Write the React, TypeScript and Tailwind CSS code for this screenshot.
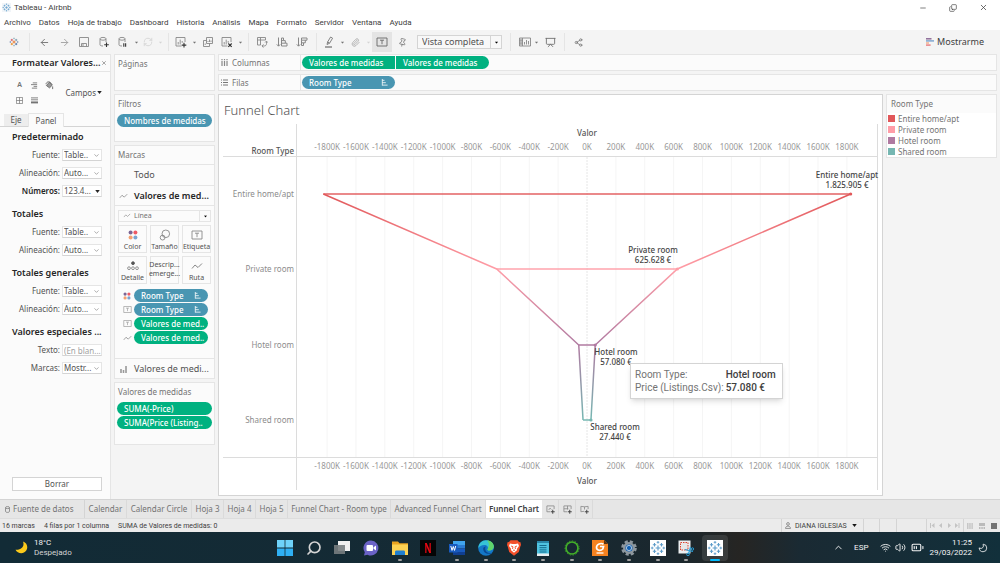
import React from 'react';
import {
  ArrowLeft,
  ArrowRight,
  BatteryMedium,
  ChevronDown,
  ChevronUp,
  Copy,
  Minus,
  Moon,
  Paperclip,
  Pin,
  Presentation,
  RefreshCw,
  Search,
  Share2,
  Volume2,
  Wifi,
  X,
} from 'lucide-react';
import clsx from 'clsx';

type IconProps = { className?: string };

/* ---------- small drawings ---------- */

const TableauMark = ({ className, mono }: IconProps & { mono?: boolean }) => {
  const c = mono
    ? ['#5b9bc9', '#5b9bc9', '#5b9bc9', '#5b9bc9', '#5b9bc9']
    : ['#e8762c', '#d8606c', '#7ba0b0', '#5a78a5', '#eb912c'];
  return (
    <svg viewBox="0 0 16 16" className={className} fill="none" strokeWidth={mono ? 1.1 : 1.6}>
      <path d="M8 5.6v4.8M5.6 8h4.8" stroke={c[0]} />
      <path d="M4.5 3v3.4M2.8 4.7h3.4" stroke={c[1]} />
      <path d="M11.5 3v3.4M9.8 4.7h3.4" stroke={c[2]} />
      <path d="M4.5 9.6V13M2.8 11.3h3.4" stroke={c[4]} />
      <path d="M11.5 9.6V13M9.8 11.3h3.4" stroke={c[3]} />
      <path d="M8 1v2.6M6.7 2.3h2.6M8 12.4v2.6M6.7 13.7h2.6" stroke={c[2]} strokeWidth="0.9" />
      <path d="M2.2 6.7v2.6M.9 8h2.6M13.8 6.7v2.6M12.5 8h2.6" stroke={c[3]} strokeWidth="0.9" />
    </svg>
  );
};

const SaveIcon = () => (
  <svg viewBox="0 0 12 12" className="size-3" fill="none" stroke="#888" strokeWidth="0.9">
    <path d="M1.5 1.5h9v9h-9zM3.5 10.5v-3h5v3M5 8v2" />
  </svg>
);

const DataIcon = ({ pause }: { pause?: boolean }) => (
  <svg viewBox="0 0 12 12" className="size-3" fill="none" stroke="#888" strokeWidth="0.9">
    <ellipse cx="5" cy="2.8" rx="3" ry="1.4" />
    <path d="M2 2.8v6c0 .8 1.3 1.2 3 1.2M8 2.8V6" />
    {pause ? (
      <path d="M6.8 7.2v3.6M8.6 7.2v3.6" stroke="#444" strokeWidth="1.2" />
    ) : (
      <path d="M8.5 6.5v4.6M6.2 8.8h4.6" stroke="#333" strokeWidth="1.1" />
    )}
  </svg>
);

const SheetIcon = ({ clear }: { clear?: boolean }) => (
  <svg viewBox="0 0 12 12" className="size-3" fill="none" stroke="#888" strokeWidth="0.9">
    <path d="M10 6V1.5H1v8.5h5.5M3.2 8.5V6M5.2 8.5V3.6M7.2 6.8V5" />
    {clear ? (
      <path d="M7.3 7.5l3.4 3.4M10.7 7.5l-3.4 3.4" stroke="#333" strokeWidth="1.1" />
    ) : (
      <path d="M9 6.8v4.6M6.7 9.1h4.6" stroke="#333" strokeWidth="1.1" />
    )}
  </svg>
);

const DuplicateIcon = () => (
  <svg viewBox="0 0 12 12" className="size-3" fill="none" stroke="#888" strokeWidth="0.9">
    <path d="M4.5 1.5h6v6h-6zM4.5 4.5h-3v6h6v-3M7.5 6V3.5M6 6V5M9 6V4.5M3.2 9V7.5" />
  </svg>
);

const SwapIcon = () => (
  <svg viewBox="0 0 12 12" className="size-3" fill="none" stroke="#888" strokeWidth="0.9">
    <path d="M1.5 1.5h8v2.5h-5v5h-3zM4.5 1.5V4M1.5 4h3M10.500 5.5v2.200c0 1.400-1 2.300-2.300 2.300H6M7.500 8.400L5.900 10l1.600 1.600M9.100 6.500L10.500 5l1 1.500" />
  </svg>
);

const SortIcon = ({ desc }: { desc?: boolean }) => (
  <svg viewBox="0 0 12 12" className="size-3" fill="none" stroke="#888" strokeWidth="1">
    <path d="M2.5 1.5v8.5M.8 8.4L2.5 10.2 4.2 8.4" />
    {desc ? (
      <path d="M5.5 2h5.500v2.200H5.500zM5.500 4.200V9.500h2V6.800h1.800V4.200M5.500 6.800h2" />
    ) : (
      <path d="M5.500 10V2h2v2.600h-2M7.500 4.600h1.800v2.600H5.500M9.300 7.200H11V10H5.500" />
    )}
  </svg>
);

const HighlightIcon = () => (
  <svg viewBox="0 0 12 12" className="size-3" fill="none" stroke="#777" strokeWidth="0.9">
    <path d="M4 8.5l.6-2.5L7.6 1l2 1.2-3 5zM4.6 6l2 1.2" />
    <path d="M2 11h7" strokeWidth="1.3" />
  </svg>
);

const TextBoxIcon = ({ className = 'size-3', color = '#666' }: IconProps & { color?: string }) => (
  <svg viewBox="0 0 12 12" className={className} fill="none" stroke={color} strokeWidth="0.9">
    <path d="M1 2h10v8H1zM4 4.2h4M6 4.2v4" />
  </svg>
);

const CardsIcon = () => (
  <svg viewBox="0 0 14 12" className="h-3 w-[14px]" fill="none" stroke="#888" strokeWidth="0.9">
    <path d="M1.500 2h11v8h-11zM4.500 2v8M1.500 4.500h3M1.500 7.200h3M6.500 8.500V6M8.500 8.500V4M10.500 8.500V5" />
    <path d="M3 2.500v7" strokeWidth="1.600" stroke="#aaa" />
  </svg>
);

const ShowMeIcon = () => (
  <svg viewBox="0 0 8 8" className="size-2" strokeWidth="1.5">
    <path d="M0 .8h5.5" stroke="#8d6b97" />
    <path d="M0 2.9h8" stroke="#7fa6d0" />
    <path d="M0 5h3" stroke="#f5b08f" />
    <path d="M0 7.1h4.6" stroke="#e98084" />
  </svg>
);

const Caret = ({ className = 'text-neutral-500' }: IconProps) => (
  <svg viewBox="0 0 6 4" className={clsx('h-[3px] w-[5px] shrink-0', className)}>
    <path d="M0 0h6L3 4z" fill="currentColor" />
  </svg>
);

const LineMark = ({ className }: IconProps) => (
  <svg viewBox="0 0 12 8" className={className} fill="none" stroke="#888" strokeWidth="1">
    <path d="M1 6.5L4 3l3 2.5L11 1.5" />
  </svg>
);

const ColorDots = ({ className }: IconProps) => (
  <svg viewBox="0 0 10 10" className={className}>
    <circle cx="2.6" cy="2.6" r="2" fill="#7c6594" />
    <circle cx="7.4" cy="2.6" r="2" fill="#ef5a65" />
    <circle cx="2.6" cy="7.4" r="2" fill="#f4a070" />
    <circle cx="7.4" cy="7.4" r="2" fill="#7ba3d0" />
  </svg>
);

const SizeIcon = () => (
  <svg viewBox="0 0 12 12" className="size-3" fill="none" stroke="#888" strokeWidth="0.9">
    <circle cx="6.8" cy="4.8" r="3.8" />
    <circle cx="3.6" cy="8.6" r="2.4" />
  </svg>
);

const DetailIcon = () => (
  <svg viewBox="0 0 12 10" className="h-[10px] w-3" fill="none" stroke="#888" strokeWidth="0.9">
    <circle cx="6" cy="2.2" r="1.4" fill="#555" stroke="#555" />
    <circle cx="2" cy="7.2" r="1.4" />
    <circle cx="6" cy="7.2" r="1.4" />
    <circle cx="10" cy="7.2" r="1.4" />
  </svg>
);

const PillSort = () => (
  <svg viewBox="0 0 8 8" className="size-[7px] shrink-0" stroke="#fff" strokeWidth="0.9">
    <path d="M1.5 0v7.5M1.5 1.5H4M1.5 4.2h4M1.5 7h6" fill="none" />
  </svg>
);

/* ---------- top of the window ---------- */

const menus = [
  'Archivo', 'Datos', 'Hoja de trabajo', 'Dashboard', 'Historia', 'Análisis',
  'Mapa', 'Formato', 'Servidor', 'Ventana', 'Ayuda',
];

const TitleBar = () => (
  <header className="bg-white font-['Roboto',sans-serif] text-[8px] leading-[14px] text-neutral-700">
    <div className="flex h-[15px] items-center pl-[2px] pr-3">
      <TableauMark mono className="mr-[3px] size-[9px] bg-slate-100" />
      <h1>Tableau - Airbnb</h1>
      <div className="ml-auto flex items-center gap-[22px] text-neutral-700">
        <button aria-label="Minimizar"><Minus size={8} /></button>
        <button aria-label="Restaurar"><Copy size={8} className="-scale-x-100 rotate-180" /></button>
        <button aria-label="Cerrar"><X size={9} /></button>
      </div>
    </div>
    <nav className="flex h-[15px] items-center gap-2 pl-1">
      {menus.map((m) => (
        <button key={m} className="whitespace-nowrap">{m}</button>
      ))}
    </nav>
  </header>
);

const Tool = ({ label, className = 'w-5', children }: { label: string; className?: string; children: React.ReactNode }) => (
  <button aria-label={label} className={clsx('flex h-5 shrink-0 items-center justify-center text-neutral-500', className)}>
    {children}
  </button>
);

const Sep = ({ className = 'w-2' }: IconProps) => (
  <div className={clsx('flex h-[18px] shrink-0 justify-center', className)}>
    <div className="w-px bg-neutral-200" />
  </div>
);

const Toolbar = () => (
  <div className="flex h-6 items-center bg-[#f4f4f4] pl-1 pr-4">
    <Tool label="Inicio"><TableauMark className="size-[10px]" /></Tool>
    <Sep className="w-[10px]" />
    <Tool label="Deshacer"><ArrowLeft size={11} /></Tool>
    <Tool label="Rehacer"><ArrowRight size={11} className="text-neutral-400" /></Tool>
    <Tool label="Guardar"><SaveIcon /></Tool>
    <Tool label="Nueva fuente de datos"><DataIcon /></Tool>
    <Tool label="Pausar actualizaciones" className="w-[18px]"><DataIcon pause /></Tool>
    <Tool label="Opciones de actualización" className="w-2"><Caret className="scale-75" /></Tool>
    <Tool label="Actualizar" className="w-4"><RefreshCw size={10} className="text-neutral-300" /></Tool>
    <Tool label="Más opciones" className="w-2"><Caret className="scale-75 text-neutral-300" /></Tool>
    <Sep />
    <Tool label="Nueva hoja" className="w-[18px]"><SheetIcon /></Tool>
    <Tool label="Opciones de hoja" className="w-2"><Caret className="scale-75" /></Tool>
    <Tool label="Duplicar"><DuplicateIcon /></Tool>
    <Tool label="Borrar hoja" className="w-[18px]"><SheetIcon clear /></Tool>
    <Tool label="Opciones de borrado" className="w-2"><Caret className="scale-75" /></Tool>
    <Sep />
    <Tool label="Intercambiar filas y columnas"><SwapIcon /></Tool>
    <Tool label="Orden ascendente"><SortIcon /></Tool>
    <Tool label="Orden descendente"><SortIcon desc /></Tool>
    <Sep />
    <Tool label="Resaltar" className="w-[18px]"><HighlightIcon /></Tool>
    <Tool label="Opciones de resaltado" className="w-2"><Caret className="scale-75" /></Tool>
    <Tool label="Agrupar" className="w-[18px]"><Paperclip size={9} className="text-neutral-400" /></Tool>
    <Tool label="Opciones de grupo" className="w-2"><Caret className="scale-75 text-neutral-300" /></Tool>
    <Tool label="Mostrar etiquetas" className="w-5 bg-[#e4e4e4]"><TextBoxIcon /></Tool>
    <Tool label="Fijar ejes"><Pin size={9} className="rotate-12" /></Tool>
    <div className="relative ml-[5px] w-[85px] shrink-0">
      <select
        aria-label="Ajuste de la vista"
        className="block h-[14px] w-full appearance-none rounded-none border border-neutral-300 bg-[#f8f8f8] pl-1 text-[9px] leading-3 text-neutral-600"
      >
        <option>Vista completa</option>
      </select>
      <div className="pointer-events-none absolute inset-y-0 right-0 flex w-3 items-center justify-center border-l border-neutral-300">
        <Caret className="scale-75" />
      </div>
    </div>
    <Sep className="w-4" />
    <Tool label="Mostrar tarjetas" className="w-[14px]"><CardsIcon /></Tool>
    <Tool label="Opciones de tarjetas" className="w-2"><Caret className="scale-75" /></Tool>
    <Tool label="Modo presentación"><Presentation size={11} /></Tool>
    <Sep />
    <Tool label="Compartir"><Share2 size={9} /></Tool>
    <button className="ml-auto flex items-center gap-[3px] text-[9px] text-neutral-700">
      <ShowMeIcon />
      Mostrarme
    </button>
  </div>
);

/* ---------- format panel ---------- */

type Field = { label: string; value: string; kind?: 'input' | 'strong' };

const groups: { title: string; fields: Field[] }[] = [
  {
    title: 'Predeterminado',
    fields: [
      { label: 'Fuente:', value: 'Table..' },
      { label: 'Alineación:', value: 'Auto...' },
      { label: 'Números:', value: '123.4...', kind: 'strong' },
    ],
  },
  {
    title: 'Totales',
    fields: [
      { label: 'Fuente:', value: 'Table..' },
      { label: 'Alineación:', value: 'Auto...' },
    ],
  },
  {
    title: 'Totales generales',
    fields: [
      { label: 'Fuente:', value: 'Table..' },
      { label: 'Alineación:', value: 'Auto...' },
    ],
  },
  {
    title: 'Valores especiales ...',
    fields: [
      { label: 'Texto:', value: '(En blan...', kind: 'input' },
      { label: 'Marcas:', value: 'Mostr...' },
    ],
  },
];

const FieldRow = ({ id, field }: { id: string; field: Field }) => {
  const box = 'block h-3 w-full appearance-none rounded-none border border-neutral-200 border-b-neutral-300 bg-white pl-px text-[8px] leading-[10px]';
  return (
    <div className="flex h-[18px] items-center gap-[2px]">
      <label
        htmlFor={id}
        className={clsx('w-[60px] text-right', field.kind === 'strong' ? 'font-semibold text-neutral-800' : 'text-neutral-600')}
      >
        {field.label}
      </label>
      <div className="relative w-10">
        {field.kind === 'input' ? (
          <input id={id} defaultValue={field.value} className={clsx(box, 'text-neutral-400')} />
        ) : (
          <>
            <select id={id} className={clsx(box, 'text-neutral-600')}>
              <option>{field.value}</option>
            </select>
            <span className="pointer-events-none absolute inset-y-0 right-[2px] flex items-center text-neutral-500">
              {field.kind === 'strong' ? <Caret className="text-neutral-800" /> : <ChevronDown size={7} />}
            </span>
          </>
        )}
      </div>
    </div>
  );
};

const FormatPanel = () => (
  <aside className="flex w-[111px] shrink-0 flex-col border-r border-neutral-200 bg-[#fbfbfb] text-[8px] leading-3 text-neutral-600">
    <div className="flex h-[18px] items-center justify-between border-b border-t border-neutral-200 pl-3 pr-[3px]">
      <h2 className="whitespace-nowrap text-[9px] font-semibold text-neutral-800">Formatear Valores...</h2>
      <button aria-label="Cerrar panel"><X size={6} /></button>
    </div>
    <div className="flex h-[41px] items-center justify-between pl-[14px] pr-2">
      <div className="grid grid-cols-3 gap-x-1 text-neutral-500">
        <button aria-label="Fuente" className="flex size-[11px] items-center justify-center text-[7px] font-semibold">A</button>
        <button aria-label="Alineación" className="flex size-[11px] items-center justify-center">
          <svg viewBox="0 0 8 8" className="size-[7px]" stroke="currentColor" fill="none"><path d="M2 1h5M0 3h7M3 5h4M1 7h6" /></svg>
        </button>
        <button aria-label="Sombreado" className="flex size-[11px] items-center justify-center">
          <svg viewBox="0 0 10 10" className="size-[9px]" stroke="#666" fill="#999"><path d="M1.5 5L5 1.2 8.2 4.5 5 7.6zM8.5 6v3" /><path d="M1 3.5C2 0 6 0 7 3.5" fill="none" /></svg>
        </button>
        <button aria-label="Bordes" className="mt-1 flex size-[11px] items-center justify-center">
          <svg viewBox="0 0 8 8" className="size-[7px]" stroke="currentColor" strokeWidth="0.8" fill="none"><path d="M.5.5h7v7h-7zM4 .5v7M.5 4h7" /></svg>
        </button>
        <button aria-label="Líneas" className="mt-1 flex size-[11px] items-center justify-center">
          <svg viewBox="0 0 8 8" className="size-[7px]" stroke="currentColor" fill="none"><path d="M0 1h8" /><path d="M0 3.2h8" /><path d="M0 6.2h8" strokeWidth="2.2" /></svg>
        </button>
      </div>
      <button className="flex items-center gap-px">
        Campos <Caret className="text-neutral-800" />
      </button>
    </div>
    <div className="flex h-[14px] items-end border-b border-neutral-300 pl-1">
      <button className="h-3 w-6 bg-neutral-200/60">Eje</button>
      <button className="-mb-px h-[14px] w-9 border-x border-t border-neutral-200 bg-[#fbfbfb]">Panel</button>
    </div>
    <div className="flex flex-col gap-[5px] pt-px">
      {groups.map((g) => (
        <section key={g.title}>
          <h3 className="pl-3 text-[9px] font-semibold leading-[18px] text-neutral-800">{g.title}</h3>
          {g.fields.map((f) => (
            <FieldRow key={f.label} id={`${g.title}-${f.label}`.replace(/\W/g, '')} field={f} />
          ))}
        </section>
      ))}
    </div>
    <button className="mx-2 mb-2 ml-3 mt-auto h-[14px] border border-neutral-300 bg-white">Borrar</button>
  </aside>
);

/* ---------- cards ---------- */

const Pill = ({ color, sort, className, children }: { color: 'blue' | 'green'; sort?: boolean; className?: string; children: React.ReactNode }) => (
  <button
    className={clsx(
      'flex h-[13px] items-center justify-between whitespace-nowrap pl-[7px] pr-[7px] text-left text-[8px] font-medium leading-3 text-white',
      color === 'blue' ? 'bg-[#4996b2]' : 'bg-[#00b180]',
      className,
    )}
  >
    {children}
    {sort && <PillSort />}
  </button>
);

const Card = ({ title, className, children }: { title: string; className?: string; children?: React.ReactNode }) => (
  <section className={clsx('border border-neutral-200 bg-[#fbfbfb]', className)}>
    <h2 className="pl-[3px] text-[8px] leading-[18px] text-neutral-500">{title}</h2>
    {children}
  </section>
);

const MarkButton = ({ icon, children }: { icon?: React.ReactNode; children: React.ReactNode }) => (
  <button className="flex h-7 flex-col items-center justify-end border border-neutral-200 bg-[#fbfbfb] pb-px text-[7px] leading-[9px] text-neutral-600">
    {icon && <span className="flex grow items-center pt-px">{icon}</span>}
    {children}
  </button>
);

const markPills = [
  { icon: <ColorDots className="size-2" />, text: 'Room Type', color: 'blue' as const },
  { icon: <TextBoxIcon className="size-[9px]" color="#999" />, text: 'Room Type', color: 'blue' as const },
  { icon: <TextBoxIcon className="size-[9px]" color="#999" />, text: 'Valores de med..', color: 'green' as const },
  { icon: <LineMark className="h-[6px] w-[9px]" />, text: 'Valores de med..', color: 'green' as const },
];

const Cards = () => (
  <div className="flex w-[101px] shrink-0 flex-col gap-[3px]">
    <Card title="Páginas" className="h-[37px]" />
    <Card title="Filtros" className="h-12">
      <Pill color="blue" className="mx-[2px] mt-px w-[95px] rounded-full">Nombres de medidas</Pill>
    </Card>
    <Card title="Marcas" className="h-[234px]">
      <button className="block h-[21px] w-full border-t border-neutral-200 pl-[19px] text-left text-[9px] text-neutral-600">Todo</button>
      <button className="flex h-[21px] w-full items-center gap-[6px] border-y border-neutral-200 pl-1 text-[9px] font-semibold text-neutral-800">
        <LineMark className="h-[6px] w-[9px] shrink-0" />
        <span className="whitespace-nowrap">Valores de med...</span>
      </button>
      <div className="mx-[3px] mt-1">
        <div className="relative">
          <select aria-label="Tipo de marca" className="block h-3 w-full appearance-none rounded-none border border-neutral-200 bg-[#fbfbfb] pl-[15px] text-[7px] leading-[10px] text-neutral-500">
            <option>Línea</option>
          </select>
          <LineMark className="pointer-events-none absolute left-[5px] top-[3px] h-[5px] w-2" />
          <div className="pointer-events-none absolute inset-y-0 right-0 flex w-3 items-center justify-center border-l border-neutral-200">
            <Caret className="scale-75" />
          </div>
        </div>
        <div className="mt-[3px] grid grid-cols-3 gap-[3px]">
          <MarkButton icon={<ColorDots className="size-[10px]" />}>Color</MarkButton>
          <MarkButton icon={<SizeIcon />}>Tamaño</MarkButton>
          <MarkButton icon={<TextBoxIcon color="#888" />}>Etiqueta</MarkButton>
          <MarkButton icon={<DetailIcon />}>Detalle</MarkButton>
          <MarkButton><span className="pb-1">Descrip...<br />emerge...</span></MarkButton>
          <MarkButton icon={<LineMark className="h-2 w-3" />}>Ruta</MarkButton>
        </div>
      </div>
      <ul className="mt-[5px] flex flex-col gap-px">
        {markPills.map((p, i) => (
          <li key={i} className="flex items-center">
            <span className="flex w-[19px] justify-center pl-[5px]">{p.icon}</span>
            <Pill color={p.color} sort={p.color === 'blue'} className="w-[74px] rounded-full">{p.text}</Pill>
          </li>
        ))}
      </ul>
      <button className="mt-[14px] flex h-5 w-full items-center gap-[6px] border-t border-neutral-200 pl-1 text-[9px] text-neutral-600">
        <svg viewBox="0 0 9 8" className="h-2 w-[9px] shrink-0" stroke="#999" strokeWidth="1.6"><path d="M2 8V4M4.5 8V5M7 8V1" /></svg>
        <span className="whitespace-nowrap">Valores de medi...</span>
      </button>
    </Card>
    <Card title="Valores de medidas" className="h-[63px]">
      <div className="mx-[2px] mt-px flex flex-col gap-px">
        <Pill color="green" className="w-[95px] rounded-full">SUMA(-Price)</Pill>
        <Pill color="green" className="w-[95px] rounded-full">SUMA(Price (Listing..</Pill>
      </div>
    </Card>
  </div>
);

/* ---------- shelves, chart, legend ---------- */

const Shelf = ({ name, icon, children }: { name: string; icon: React.ReactNode; children: React.ReactNode }) => (
  <div className="flex h-[17px] items-center border border-neutral-200 bg-[#fbfbfb] text-[8px] text-neutral-500">
    <div className="flex h-full w-[82px] shrink-0 items-center gap-1 border-r border-neutral-200 pl-[2px]">
      {icon}
      {name}
    </div>
    <div className="flex gap-px pl-px">{children}</div>
  </div>
);

const RED = '#e15759';
const PINK = '#ff9da7';
const PURPLE = '#b07aa1';
const TEAL = '#76b7b2';

const rooms = [
  { name: 'Entire home/apt', price: 1825905, label: '1.825.905 €', color: RED, y: 72 },
  { name: 'Private room', price: 625628, label: '625.628 €', color: PINK, y: 147 },
  { name: 'Hotel room', price: 57080, label: '57.080 €', color: PURPLE, y: 223 },
  { name: 'Shared room', price: 27440, label: '27.440 €', color: TEAL, y: 298 },
];

const ticks = Array.from({ length: 19 }, (_, i) => (i - 9) * 200);

// value in thousands -> horizontal position
const xScale = (k: number) => 368 + k * 0.1444;

const side = (sign: number) => rooms.map((r) => `${xScale((sign * r.price) / 1000)},${r.y}`).join(' ');

const labelPos = [
  [628, 56],
  [434, 131],
  [397, 233],
  [396, 308],
];

const FunnelChart = () => (
  <svg viewBox="0 0 663 370" className="block w-full" role="img" aria-label="Funnel Chart" fontSize="8">
    <defs>
      <linearGradient id="funnel" gradientUnits="userSpaceOnUse" x1="0" y1="72" x2="0" y2="298">
        <stop offset="0" stopColor={RED} />
        <stop offset="0.333" stopColor={PINK} />
        <stop offset="0.667" stopColor={PURPLE} />
        <stop offset="1" stopColor={TEAL} />
      </linearGradient>
    </defs>
    <g stroke="#f5f5f5">
      {ticks.map((t) => (
        <line key={t} x1={xScale(t)} x2={xScale(t)} y1="35" y2="335" stroke={t === 0 ? '#e6e6e6' : undefined} strokeDasharray={t === 0 ? '2 1' : undefined} />
      ))}
    </g>
    <path d="M4 34.5h655M4 335.5h655M77.5 2v366M658.5 2v366" stroke="#dcdcdc" fill="none" />
    <g fill="#999" textAnchor="middle">
      {ticks.map((t) => (
        <React.Fragment key={t}>
          <text x={xScale(t)} y="28">{t}K</text>
          <text x={xScale(t)} y="347">{t}K</text>
        </React.Fragment>
      ))}
    </g>
    <g fill="#555" textAnchor="middle" fontWeight="500">
      <text x="368" y="14">Valor</text>
      <text x="368" y="362">Valor</text>
      <text x="75" y="32" textAnchor="end">Room Type</text>
    </g>
    <g fill="#8c8c8c" textAnchor="end">
      {rooms.map((r) => (
        <text key={r.name} x="75" y={r.y + 3}>{r.name}</text>
      ))}
    </g>
    {rooms.map((r, i) => (
      <line
        key={r.name}
        x1={xScale(-r.price / 1000)}
        x2={xScale(r.price / 1000)}
        y1={r.y}
        y2={r.y}
        stroke={r.color}
        strokeWidth={i < 2 ? 2 : 1.5}
        strokeOpacity={i < 2 ? 0.7 : 1}
      />
    ))}
    <polyline points={side(-1)} fill="none" stroke="url(#funnel)" strokeWidth="1.5" />
    <polyline points={side(1)} fill="none" stroke="url(#funnel)" strokeWidth="1.5" />
    {rooms.map((r) => (
      <circle key={r.name} cx={xScale(r.price / 1000)} cy={r.y} r="1.6" fill={r.color} />
    ))}
    <g fill="#444" textAnchor="middle" fontWeight="500">
      {rooms.map((r, i) => (
        <text key={r.name} x={labelPos[i][0]} y={labelPos[i][1]}>
          {r.name}
          <tspan x={labelPos[i][0]} dy="10">{r.label}</tspan>
        </text>
      ))}
    </g>
  </svg>
);

const Sheet = () => (
  <section className="relative mb-[3px] grow border border-neutral-300 bg-white">
    <h2 className="h-[27px] pl-[5px] pt-1 text-[13px] font-light leading-[22px] text-neutral-600">Funnel Chart</h2>
    <FunnelChart />
    <div role="tooltip" className="absolute left-[62%] top-[67%] border border-neutral-300 bg-white py-1 pl-1 pr-[6px] font-['Roboto',sans-serif] shadow-md">
      <dl className="grid grid-cols-[auto_auto] gap-x-[2px] whitespace-nowrap text-[10px] leading-[13px]">
        <dt className="text-neutral-500">Room Type:</dt>
        <dd className="font-medium text-neutral-700">Hotel room</dd>
        <dt className="text-neutral-500">Price (Listings.Csv):</dt>
        <dd className="font-medium text-neutral-700">57.080 €</dd>
      </dl>
    </div>
  </section>
);

const legend = [
  { name: 'Entire home/apt', swatch: 'bg-[#e15759]' },
  { name: 'Private room', swatch: 'bg-[#ff9da7]' },
  { name: 'Hotel room', swatch: 'bg-[#b07aa1]' },
  { name: 'Shared room', swatch: 'bg-[#76b7b2]' },
];

const Legend = () => (
  <aside className="w-[111px] shrink-0 self-start border border-neutral-200 bg-white text-[8px] text-neutral-500">
    <h2 className="bg-[#fbfbfb] pl-1 leading-[18px]">Room Type</h2>
    <ul>
      {legend.map((l) => (
        <li key={l.name} className="flex items-center gap-[3px] pl-px leading-[11px]">
          <span className={clsx('size-[7px]', l.swatch)} />
          {l.name}
        </li>
      ))}
    </ul>
  </aside>
);

const Workspace = () => (
  <main className="flex min-w-0 grow flex-col gap-[3px]">
    <Shelf
      name="Columnas"
      icon={<svg viewBox="0 0 7 7" className="size-[7px]" stroke="#888" strokeWidth="1.2"><path d="M1 2v5M3.5 2v5M6 2v5M.4.6h1.2M2.900.6h1.200M5.400.6h1.200" /></svg>}
    >
      <Pill color="green" className="w-[93px] rounded-l-full">Valores de medidas</Pill>
      <Pill color="green" className="w-[93px] rounded-r-full">Valores de medidas</Pill>
    </Shelf>
    <Shelf
      name="Filas"
      icon={<svg viewBox="0 0 7 7" className="size-[7px]" stroke="#777" strokeWidth="1"><path d="M0 1h1M2 1h5M0 3.5h1M2 3.5h5M0 6h1M2 6h5" /></svg>}
    >
      <Pill color="blue" sort className="w-[93px] rounded-full">Room Type</Pill>
    </Shelf>
    <div className="flex grow gap-[3px]">
      <Sheet />
      <Legend />
    </div>
  </main>
);

/* ---------- bottom bars ---------- */

const tabs = [
  { name: 'Calendar', w: 'w-[42px]' },
  { name: 'Calendar Circle', w: 'w-[65px]' },
  { name: 'Hoja 3', w: 'w-8' },
  { name: 'Hoja 4', w: 'w-8' },
  { name: 'Hoja 5', w: 'w-8' },
  { name: 'Funnel Chart - Room type', w: 'w-[103px]' },
  { name: 'Advanced Funnel Chart', w: 'w-[95px]' },
];

const NewTab = ({ label, d }: { label: string; d: string }) => (
  <button aria-label={label} className="flex w-[17px] items-center justify-center border-r border-neutral-300/70">
    <svg viewBox="0 0 10 10" className="size-[9px]" fill="none" stroke="#888" strokeWidth="0.9">
      <path d={d} />
      <path d="M7.5 5.3v4.4M5.3 7.5h4.4" stroke="#444" strokeWidth="1.1" />
    </svg>
  </button>
);

const SheetTabs = () => (
  <nav className="flex h-[19px] border-t border-neutral-300 bg-[#e6e6e6] text-[8px] text-neutral-500">
    <button className="flex w-[85px] items-center gap-[3px] border-r border-neutral-300 pl-[5px]">
      <svg viewBox="0 0 6 8" className="h-[7px] w-[5px]" fill="none" stroke="#777" strokeWidth="0.9">
        <ellipse cx="3" cy="1.7" rx="2.4" ry="1.2" />
        <path d="M.6 1.7v4.6c0 1.6 4.8 1.6 4.8 0V1.7" />
      </svg>
      Fuente de datos
    </button>
    {tabs.map((t) => (
      <button key={t.name} className={clsx('whitespace-nowrap border-r border-neutral-300/70', t.w)}>{t.name}</button>
    ))}
    <button className="w-[56px] whitespace-nowrap bg-white font-semibold text-neutral-700">Funnel Chart</button>
    <NewTab label="Nueva hoja de trabajo" d="M9 4.5V1H1v6.5h3.5M3 5.5l1.5-2L6 5" />
    <NewTab label="Nuevo dashboard" d="M9 4.5V1H1v6.5h3.5M5 1v4M1 4.2h5" />
    <NewTab label="Nueva historia" d="M9 4.5V1.5L5 2 1 1.5v6l3.5-.5M5 2v3" />
  </nav>
);

const StatusBar = () => (
  <footer className="flex h-[14px] items-center gap-[9px] border-t border-neutral-300/60 bg-[#ebebeb] pl-[2px] font-['Roboto',sans-serif] text-[7px] leading-3 text-neutral-700">
    <span>16 marcas</span>
    <span>4 filas por 1 columna</span>
    <span>SUMA de Valores de medidas: 0</span>
    <div className="ml-auto flex h-full items-stretch divide-x divide-neutral-300 border-l border-neutral-300">
      <button className="flex w-[82px] items-center gap-1 pl-[3px]">
        <svg viewBox="0 0 7 8" className="h-[7px] w-[6px]" fill="none" stroke="#777" strokeWidth="0.9">
          <circle cx="3.5" cy="2.2" r="1.6" />
          <path d="M.6 7.4c0-3.6 5.8-3.6 5.8 0z" />
        </svg>
        <span className="whitespace-nowrap">DIANA IGLESIAS</span>
        <Caret className="ml-px text-neutral-900" />
      </button>
      <div className="w-4" />
      <div className="w-[17px]" />
      <div className="w-[30px]" />
      <div className="flex w-[37px] items-center justify-center">
        <svg viewBox="0 0 30 5" className="h-[5px] w-[30px]" fill="#c4c4c4">
          <path d="M0 0h1v5H0zM4.5 0v5L1.5 2.5zM12 0v5L9 2.5zM18 0v5l3-2.5zM25 0v5l3-2.5zM28.500 0h1v5h-1z" />
        </svg>
      </div>
      <div className="flex w-9 items-center justify-around">
        <svg viewBox="0 0 6 6" className="size-[6px]" stroke="#bbb"><path d="M0 1h6M0 3h6M0 5h6" strokeDasharray="1.500 .7" strokeWidth="1.300" /></svg>
        <svg viewBox="0 0 6 6" className="size-[6px]" fill="#bbb"><path d="M0 0h6v3H0zM0 4h1.500v2H0zM2.300 4h1.500v2H2.300zM4.500 4H6v2H4.500z" /></svg>
        <span className="size-[6px] bg-neutral-500" />
      </div>
    </div>
  </footer>
);

/* ---------- taskbar ---------- */

const App16 = ({ children }: { children: React.ReactNode }) => (
  <svg viewBox="0 0 16 16" className="size-4">{children}</svg>
);

const apps: { name: string; state?: 'open' | 'active'; icon: React.ReactNode }[] = [
  {
    name: 'Inicio',
    icon: (
      <App16>
        <path d="M0 0h7.600v7.600H0zM8.400 0H16v7.600H8.400z" fill="#6fd3fa" />
        <path d="M0 8.400h7.600V16H0zM8.400 8.400H16V16H8.400z" fill="#2fb0f4" />
      </App16>
    ),
  },
  { name: 'Buscar', icon: <Search size={16} strokeWidth={2.500} className="-scale-x-100 text-neutral-300" /> },
  {
    name: 'Vista de tareas',
    icon: (
      <App16>
        <rect x="4" y="1" width="12" height="10" fill="#f0f0f0" />
        <rect x="0" y="5" width="11" height="9" fill="#777d80" opacity="0.9" />
      </App16>
    ),
  },
  {
    name: 'Chat',
    icon: (
      <App16>
        <path d="M8 .5a7.500 7.500 0 1 1-3.500 14.200L1 15.500l.8-3.300A7.500 7.500 0 0 1 8 .5z" fill="#6b63c7" />
        <rect x="3.500" y="5" width="6.500" height="6" rx="1" fill="#fff" />
        <path d="M10.500 7.200L13 5.500v5l-2.500-1.700z" fill="#fff" />
      </App16>
    ),
  },
  {
    name: 'Explorador de archivos',
    state: 'open',
    icon: (
      <App16>
        <path d="M0 1.500h6l1.500 1.800H16V15H0z" fill="#e9a420" />
        <path d="M0 4.500h16V15H0z" fill="#fcd253" />
        <path d="M3 15v-3c0-1 .6-1.500 1.500-1.500h7c.9 0 1.500.5 1.500 1.500v3z" fill="#1f7fd0" />
      </App16>
    ),
  },
  {
    name: 'Netflix',
    icon: (
      <App16>
        <path d="M0 0h16v16H0z" fill="#050505" />
        <path d="M5.800 3v10M10.200 3v10" stroke="#b1060f" strokeWidth="1.600" />
        <path d="M5 3h1.700L11 13H9.300z" fill="#e50914" />
      </App16>
    ),
  },
  {
    name: 'Word',
    state: 'open',
    icon: (
      <App16>
        <path d="M4 1h12v4H4z" fill="#41a5ee" />
        <path d="M4 5h12v3.500H4z" fill="#2b7cd3" />
        <path d="M4 8.500h12V12H4z" fill="#185abd" />
        <path d="M4 12h12v3H4z" fill="#103f91" />
        <path d="M0 4h8.500v8.500H0z" fill="#185abd" />
        <path d="M1.800 6l1.200 4.400L4.300 6.500l1.200 3.900L6.700 6" fill="none" stroke="#fff" strokeWidth="1" />
      </App16>
    ),
  },
  {
    name: 'Edge',
    state: 'open',
    icon: (
      <App16>
        <circle cx="8" cy="8" r="7.800" fill="#1478c8" />
        <path d="M.3 8C.5 3.500 4 .2 8 .2s7.800 3 7.800 6.300c0 2.500-2 4-4.500 4-1.500 0-2.300-.6-1.500-1.800C10.500 7 9 5 6.500 5 3.500 5 1 6.500.3 8z" fill="#36c3d6" />
        <path d="M9 .3c4 .3 6.800 3.200 6.800 6.200 0 2.500-2 4-4.500 4-1.500 0-2.300-.6-1.500-1.800 1.700-2.700 1.700-6-0.800-8.400z" fill="#5fd46b" />
        <path d="M5.200 8.500c0 4 3.300 6 7 5.200 1-.2 1.700-.7 2-.9-3 1-7-.3-7-4.300 0-.8.200-1.500.7-2-1.500.2-2.700 1-2.700 2z" fill="#0b4a94" />
      </App16>
    ),
  },
  {
    name: 'Brave',
    state: 'open',
    icon: (
      <App16>
        <path d="M4.500.3h7L13 2l1.500.3L15 5l-.7 1.500-1.500 5.500L8 15.800 3.200 12 1.700 6.500 1 5l.5-2.700L3 2z" fill="#f4502a" />
        <path d="M4 3.500l2.500.4h3l2.500-.4L13 6l-2.200 3 .4 1L8 12.800 4.800 10l.4-1L3 6z" fill="#fff" />
        <path d="M5 6l2 .8L6.500 9M11 6l-2 .8.5 2.200M7 10.500l1-.6 1 .6" stroke="#f4502a" strokeWidth="0.9" fill="none" />
      </App16>
    ),
  },
  {
    name: 'Bloc de notas',
    state: 'open',
    icon: (
      <App16>
        <rect x="2" y="1" width="12" height="14" rx="0.800" fill="#4fc3e0" />
        <path d="M2 13.500h12V16H2z" fill="#e8eef0" />
        <path d="M2 1h12v2H2z" fill="#2a86a8" />
        <path d="M4.500 5.500h7M4.500 7.700h7M4.500 9.900h7M4.500 12h7" stroke="#136b8e" />
      </App16>
    ),
  },
  {
    name: 'Anaconda',
    state: 'open',
    icon: (
      <App16>
        <circle cx="8" cy="8" r="6" fill="none" stroke="#43b02a" strokeWidth="1.700" />
        <circle cx="8" cy="8" r="7.100" fill="none" stroke="#43b02a" strokeWidth="0.800" strokeDasharray="1.500 1.500" />
      </App16>
    ),
  },
  {
    name: 'Lector de PDF',
    state: 'open',
    icon: (
      <App16>
        <path d="M0 0h12l4 4v12H0z" fill="#f58220" />
        <path d="M12 0l4 4h-4z" fill="#5b3413" />
        <path d="M11.500 4.200C9 2.600 4.500 4 4.500 7.500c0 3 4 3.800 6.300 1.500L11.500 6.500H8" fill="none" stroke="#fff" strokeWidth="1.700" />
        <path d="M4.500 13h7" stroke="#fff" strokeWidth="1.300" />
      </App16>
    ),
  },
  {
    name: 'Configuración',
    state: 'open',
    icon: (
      <App16>
        <circle cx="8" cy="8" r="6.300" fill="none" stroke="#8d979e" strokeWidth="3" strokeDasharray="3 1.950" />
        <circle cx="8" cy="8" r="4.800" fill="#1463b5" stroke="#8d979e" strokeWidth="2.400" />
        <circle cx="8" cy="8" r="2.600" fill="#0f5fb3" stroke="#d5dde2" strokeWidth="0.800" />
      </App16>
    ),
  },
  { name: 'Tableau', state: 'open', icon: <TableauMark mono className="size-4 bg-white" /> },
  {
    name: 'Recortes',
    state: 'open',
    icon: (
      <App16>
        <rect x="0.500" y="0.500" width="12" height="13" fill="#eceff1" />
        <rect x="2.500" y="2.500" width="7.500" height="7.500" fill="#e6e6e6" stroke="#d9432f" strokeDasharray="1.500 1" />
        <path d="M7 9.500l8 2M12.500 7l-2 7" stroke="#2a9fd8" strokeWidth="1.200" />
        <circle cx="10" cy="14.500" r="1.300" fill="none" stroke="#2a9fd8" />
        <circle cx="14.500" cy="9" r="1.200" fill="none" stroke="#2a9fd8" />
      </App16>
    ),
  },
  { name: 'Tableau - Airbnb', state: 'active', icon: <TableauMark mono className="size-4 bg-white" /> },
];

const Taskbar = () => (
  <footer className="flex h-[31px] items-center justify-between bg-[linear-gradient(90deg,#122b36_0%,#152a34_50%,#1b272d_68%,#262523_74%,#1a2a33_80%,#12303b_100%)] px-3 font-['Roboto',sans-serif] text-[8px] leading-[10px] text-neutral-100">
    <div className="flex flex-1 items-center gap-[6px]">
      <svg viewBox="0 0 13 13" className="ml-[3px] size-[13px]">
        <path d="M8 .5c1.800 4.500-1.500 8.700-7.500 8.200 1.500 3 5.500 4.500 8.500 2.800C13.500 9 13.500 2.500 8 .5z" fill="#fbc91b" />
      </svg>
      <div>
        <p>18°C</p>
        <p className="text-neutral-300">Despejado</p>
      </div>
    </div>
    <div className="flex w-[446px] items-center justify-between">
      {apps.map((a) => (
        <button
          key={a.name}
          aria-label={a.name}
          className={clsx(
            'relative -mx-[5px] flex h-[26px] w-[26px] items-center justify-center rounded-sm',
            a.state === 'active' && 'bg-white/10',
          )}
        >
          {a.icon}
          {a.state && (
            <span
              className={clsx(
                'absolute bottom-0 left-1/2 -translate-x-1/2 rounded-full',
                a.state === 'active' ? 'h-[2px] w-[10px] bg-sky-400' : 'h-[2px] w-1 bg-neutral-400',
              )}
            />
          )}
        </button>
      ))}
    </div>
    <div className="flex flex-1 items-center justify-end">
      <ChevronUp size={11} className="mr-[10px]" />
      <span className="mr-3">ESP</span>
      <Wifi size={11} className="mr-1" />
      <Volume2 size={11} className="mr-[5px]" />
      <BatteryMedium size={13} className="mr-[5px]" />
      <div className="mr-[6px] text-right">
        <p>11:25</p>
        <p>29/03/2022</p>
      </div>
      <Moon size={10} className="-scale-x-100" />
    </div>
  </footer>
);

export default function App() {
  return (
    <div className="flex min-h-screen flex-col bg-[#f4f4f4] font-['Noto_Sans','Open_Sans',sans-serif]">
      <TitleBar />
      <Toolbar />
      <div className="flex grow gap-[3px] pr-[3px]">
        <FormatPanel />
        <Cards />
        <Workspace />
      </div>
      <SheetTabs />
      <StatusBar />
      <Taskbar />
    </div>
  );
}
